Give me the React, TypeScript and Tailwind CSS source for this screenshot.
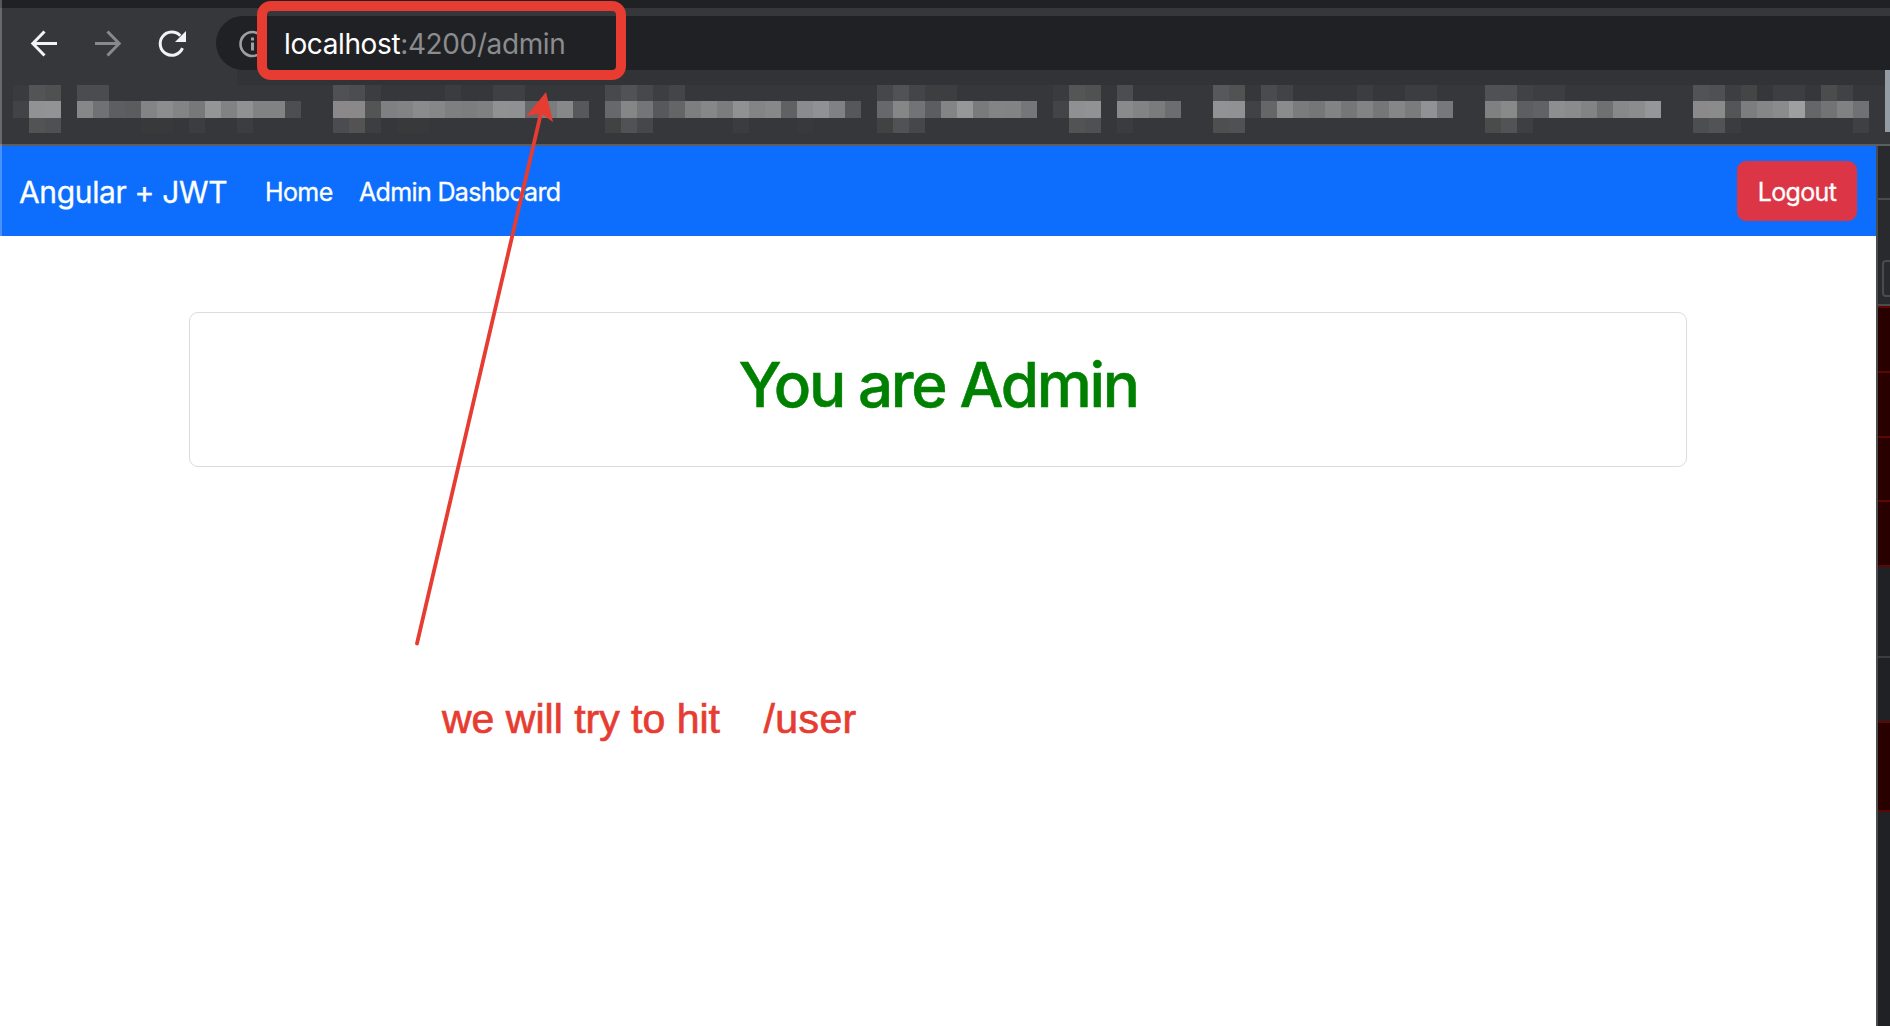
import type { ReactNode } from "react";

type Run = [start: number, shades: string];

// Each run is a starting column and the consecutive cell colours, six hex digits each.
const topRow: Run[] = [
  [0, "3a3b3e 525455 4f5050"],
  [4, "4b4c50 4b4c50"],
  [20, "505155 4c4d50 3c3d40"],
  [27, "3b3c3f"],
  [30, "3f4043 3f4043"],
  [37, "48494d 505256 47484b 3d3e41 444548"],
  [54, "46474a 505256 444548 3d3e40 3d3e3f"],
  [65, "3a3b3e 545555 505151"],
  [69, "4c4d51"],
  [75, "56585b 515252"],
  [78, "4a4b4f 424346"],
  [84, "3c3d40"],
  [87, "3c3d40 3c3d40"],
  [92, "505154 4f5054 414245 3d3e41 3d3e41"],
  [105, "525357 4f5054 3d3e41 454545"],
  [110, "3d3e41 3d3e41"],
  [113, "4b4c4c 414245"],
];

const middleRow: Run[] = [
  [0, "424346 919294 929394"],
  [4, "868789 707173 5d5e62 5b5c5e 838485 8c8d8e 838485 77787a 949597 818284 909193 818284 818284 4d4e50"],
  [20, "8a8889 8a8889 535454 7f8081 828384 8a8b8d 868789 7e7f81 7c7d7f 7f8081 909193 8f9092 66676b 7b7c7e 87888a 57585a"],
  [37, "67686c 878687 747577 57585b 646566 7d7e80 868789 7b7c7e 909193 838486 87888a 606163 8a8b8d 909194 808183 56575b"],
  [54, "67686c 878687 727376 5c5d61 838485 969799 797a7c 838486 828385 757678"],
  [65, "434447 8f9092 919294"],
  [69, "898a8b 828384 7a7b7d 6c6d6f"],
  [75, "919294 909193 414245 656667 8a8b8c 7a7b7d 757678 828384 757678 828384 757678 858688 7a7b7c 919294 77787c"],
  [92, "7f8082 8a898a 5d5e60 616267 8d8e90 8a8b8d 828384 6f7072 87888a 8b8c8e 959698"],
  [105, "8b8a8b 8c8b8c 545556 7c7d7e 858687 8a8b8d 9f9fa1 656668 727375 808183 707173"],
];

const bottomRow: Run[] = [
  [1, "525353 4f5053"],
  [8, "38393b 38393b"],
  [11, "3c3d40"],
  [14, "3c3d40"],
  [20, "4b4c51 525352 3d3e41"],
  [24, "38393b 38393b"],
  [37, "414242 515255 464749"],
  [45, "3b3c3f"],
  [49, "39393c"],
  [54, "414242 515255 464749"],
  [66, "525353 4f5053"],
  [69, "3b3c3f"],
  [75, "4e4f4f 505152"],
  [92, "4a4b4b 525354 3e3f42"],
  [105, "4d4e51 525354 3b3c3f"],
  [115, "3f4043"],
];

function MosaicRow({ runs, className }: { runs: Run[]; className: string }) {
  const cells: string[] = Array(117).fill("transparent");
  runs.forEach(([start, shades]) =>
    shades.split(" ").forEach((s, i) => {
      cells[start + i] = `#${s}`;
    }),
  );
  return (
    <div className={`flex ${className}`}>
      {cells.map((c, i) => (
        <span key={i} className="h-full w-4 shrink-0" style={{ backgroundColor: c }} />
      ))}
    </div>
  );
}

function Toolbar() {
  return (
    <div className="flex h-[62px] shrink-0">
      <div className="flex w-[216px] shrink-0 items-center">
        <svg width="216" height="62" viewBox="0 8 216 62" fill="none" strokeWidth="3">
          <path d="M57 43.5H32.5M44.5 31.5 32.8 43.5 44.5 55.5" stroke="#f1f3f4" />
          <path d="M95 43.5h24.5M107.500 31.5l11.700 12-11.700 12" stroke="#88898b" />
          <path d="M182.500 48.200A11.600 11.600 0 1 1 180.300 35.800" stroke="#f1f3f4" />
          <path d="M186 31v11h-11z" fill="#f1f3f4" />
        </svg>
      </div>
      <div className="mt-2 flex h-[54px] grow items-center rounded-l-full bg-[#202124]">
        <svg className="ml-[22px] shrink-0" width="29" height="29" viewBox="0 0 29 29" fill="none">
          <circle cx="14.500" cy="15" r="12" stroke="#9aa0a6" strokeWidth="2.600" />
          <path d="M14.500 13.500v8M14.500 8.500v3" stroke="#9aa0a6" strokeWidth="3" />
        </svg>
        <span className="ml-[17px] mt-[2px] whitespace-nowrap text-[28px] leading-none tracking-[-0.38px] text-white">
          localhost<span className="text-[#8b8c8e]">:4200/admin</span>
        </span>
      </div>
    </div>
  );
}

function Bookmarks() {
  return (
    <div className="relative flex h-[76px] shrink-0 flex-col border-b-2 border-[#5c5d60]">
      <div className="ml-[237px] h-[15px] shrink-0 bg-[#323336]" />
      <div className="ml-[13px] overflow-hidden">
        <MosaicRow runs={topRow} className="h-4" />
        <MosaicRow runs={middleRow} className="h-[17px]" />
        <MosaicRow runs={bottomRow} className="h-[15px]" />
      </div>
      <div className="absolute right-0 top-0 h-[62px] w-[5px] bg-[#939ca5]" />
    </div>
  );
}

function NavText({ children, className }: { children: ReactNode; className: string }) {
  return <span className={`whitespace-nowrap leading-none text-white ${className}`}>{children}</span>;
}

function Page() {
  return (
    <main className="flex grow flex-col bg-white">
      <nav className="flex h-[90px] items-center bg-[#0d6efd] pl-[19px] pr-[19px]">
        <NavText className="mt-[2px] w-[246px] text-[30px] tracking-[-0.35px] [-webkit-text-stroke:0.3px_white]">
          Angular + JWT
        </NavText>
        <NavText className="mt-[2px] w-[94px] text-[25px] tracking-[-0.6px] [-webkit-text-stroke:0.3px_white]">Home</NavText>
        <NavText className="mt-[2px] grow text-[25px] tracking-[-0.65px] [-webkit-text-stroke:0.3px_white]">
          Admin Dashboard
        </NavText>
        <button className="h-[60px] w-[120px] rounded-[9px] bg-[#dc3545] pt-[2px] text-[25px] leading-none tracking-[-0.65px] text-white [-webkit-text-stroke:0.3px_white]">
          Logout
        </button>
      </nav>
      <section className="mx-[189px] mt-[76px] flex h-[155px] justify-center rounded-[9px] border border-[#dcdcdc]">
        <h1 className="mt-[41px] whitespace-nowrap text-[62px] font-medium leading-none tracking-[-2.35px] text-[#008000] [-webkit-text-stroke:0.5px_#008000]">
          You are Admin
        </h1>
      </section>
    </main>
  );
}

function DevTools() {
  return (
    <aside className="flex w-[14px] shrink-0 flex-col overflow-hidden border-l-2 border-[#4a4c50] bg-[#202124]">
      <div className="h-[54px] shrink-0 border-b-2 border-[#4a4b4e] bg-[#292a2d]" />
      <div className="h-[106px] shrink-0 border-b-2 border-[#4a4b4e] bg-[#292a2d] pl-1 pt-[60px]">
        <div className="h-[37px] w-10 rounded-[4px] border-2 border-[#4a4b4e]" />
      </div>
      <div className="h-[65px] shrink-0 border-t-2 border-[#5c0700] bg-[#290000]" />
      <div className="h-[65px] shrink-0 border-t-2 border-[#5c0700] bg-[#290000]" />
      <div className="h-[64px] shrink-0 border-t-2 border-[#5c0700] bg-[#290000]" />
      <div className="h-[67px] shrink-0 border-y-2 border-[#5c0700] bg-[#290000]" />
      <div className="h-[91px] shrink-0 border-b-2 border-[#3c3d3c]" />
      <div className="h-[63px] shrink-0" />
      <div className="h-[91px] shrink-0 border-y-2 border-[#5c0700] bg-[#290000]" />
    </aside>
  );
}

function Annotations() {
  return (
    <>
      <div className="absolute left-[257px] top-[1px] h-[79px] w-[369px] rounded-[14px] border-[10px] border-[#e63c31]" />
      <svg className="absolute left-[400px] top-[85px]" width="170" height="570" viewBox="400 85 170 570">
        <path d="M417 643.500 541 113" stroke="#e63c31" strokeWidth="3.800" strokeLinecap="round" />
        <path d="M546 92 553 122 541 113.500 526.500 116z" fill="#e63c31" />
      </svg>
      <p className="absolute left-[442px] top-[699px] whitespace-pre font-['Liberation_Sans',Arial,sans-serif] text-[41px] leading-none text-[#e63c31] [-webkit-text-stroke:0.7px_#e63c31]">
        {"we will try to hit    "}
        <span className="-ml-[2px] tracking-[0.4px]">/user</span>
      </p>
    </>
  );
}

export default function App() {
  return (
    <div className="relative flex h-[1026px] w-[1890px] flex-col overflow-hidden bg-[#36373a] font-['Inter',sans-serif]">
      <div className="h-2 shrink-0 bg-[#202124]" />
      <Toolbar />
      <Bookmarks />
      <div className="flex grow">
        <Page />
        <DevTools />
      </div>
      <div className="absolute left-0 top-0 h-[236px] w-[2px] bg-white/25" />
      <Annotations />
    </div>
  );
}
